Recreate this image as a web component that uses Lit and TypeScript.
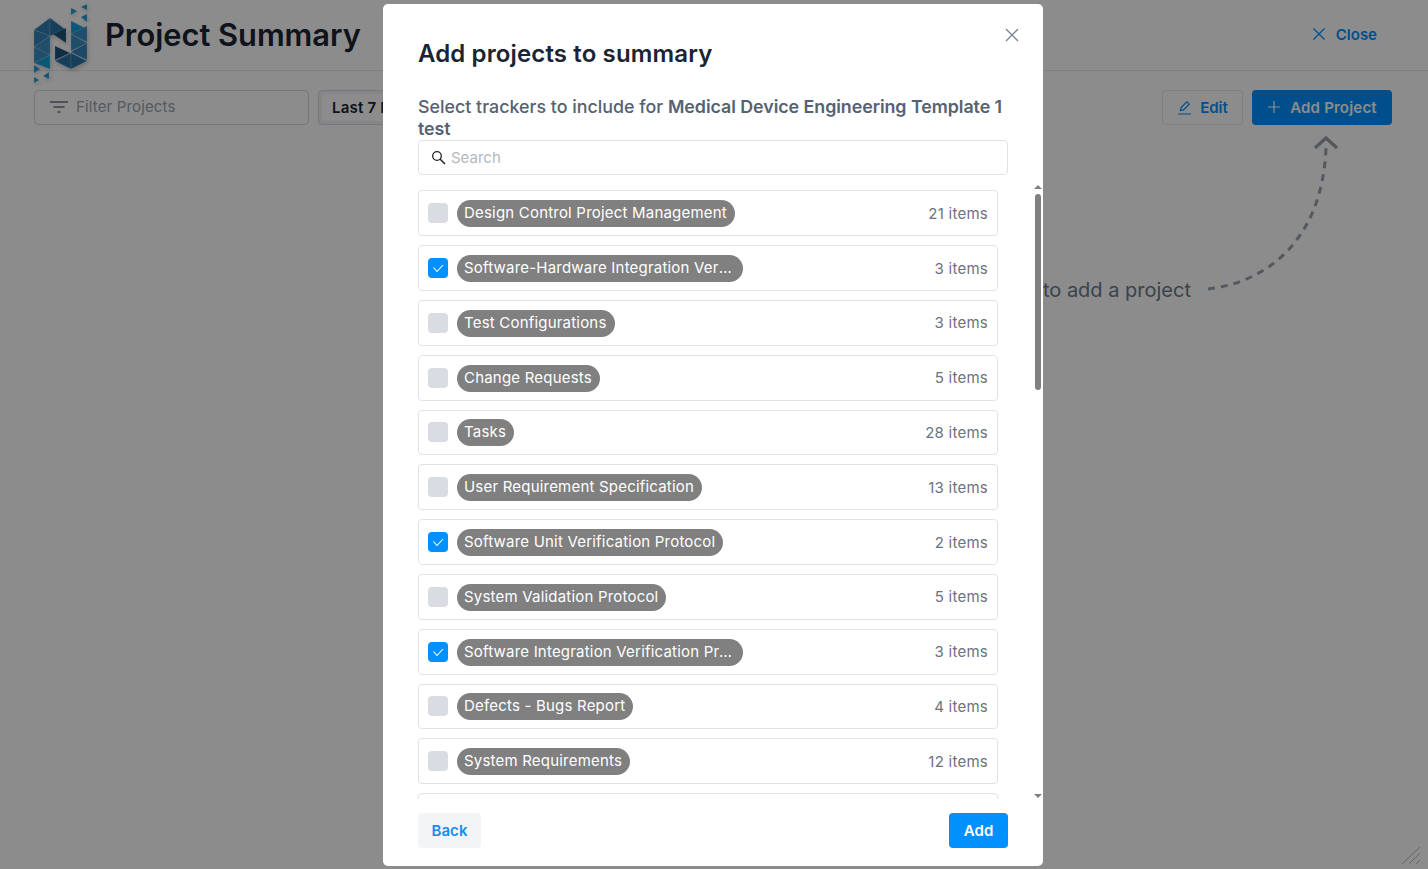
import { LitElement, html, css, svg } from "lit";
import { customElement } from "lit/decorators.js";

const rows: [string, string, boolean][] = [
  ["Design Control Project Management", "21 items", false],
  ["Software-Hardware Integration Verification Protocol", "3 items", true],
  ["Test Configurations", "3 items", false],
  ["Change Requests", "5 items", false],
  ["Tasks", "28 items", false],
  ["User Requirement Specification", "13 items", false],
  ["Software Unit Verification Protocol", "2 items", true],
  ["System Validation Protocol", "5 items", false],
  ["Software Integration Verification Protocol", "3 items", true],
  ["Defects - Bugs Report", "4 items", false],
  ["System Requirements", "12 items", false],
];

const tris: [string, string][] = [
  ["34,30 50,18 50,36", "#2f7fb4"],
  ["50,18 66,30 50,36", "#2a74a8"],
  ["53,34 66,28 66,43", "#1b5278"],
  ["34,30 50,36 34,47", "#3284ba"],
  ["34,47 50,36 50,55", "#3a8fc4"],
  ["34,47 50,55 34,63", "#3a8fc4"],
  ["34,63 50,55 50,69", "#14a0d8"],
  ["34,65 40,69 34,73", "#14a0d8"],
  ["49,72 43,76 49,79", "#14a0d8"],
  ["34,77 39,80 34,83", "#14a0d8"],
  ["71,8 77,11 71,15", "#14a0d8"],
  ["87,4 81,7 87,10", "#14a0d8"],
  ["87,14 81,17 87,22", "#14a0d8"],
  ["71,21 87,29 71,34", "#14a0d8"],
  ["87,26 71,34 87,42", "#3a8fc4"],
  ["71,34 87,43 71,51", "#3a8fc4"],
  ["87,43 71,52 87,60", "#3284ba"],
  ["55,46 70,53 55,60", "#1b5278"],
  ["55,61 71,53 71,69", "#2a74a8"],
  ["71,53 87,61 71,69", "#2a74a8"],
];

@customElement("app-root")
export class AppRoot extends LitElement {
  static styles = css`
    :host { display: block; height: 869px; overflow: hidden; position: relative; font-family: Inter, "Liberation Sans", sans-serif; background: #fff; color: #111827; }
    .page { height: 869px; display: flex; flex-direction: column; border-radius: 8px; }
    .header { flex: none; display: flex; align-items: center; justify-content: space-between; padding: 0 51px 2px 105px; height: 68px; border-bottom: 1px solid #e5e7eb; position: relative; }
    .logo { position: absolute; left: 0; top: 0; width: 100px; height: 90px; filter: drop-shadow(1px 2px 2px rgba(0,0,0,.2)); }
    h1 { margin: 0; font-size: 30.800px; font-weight: 600; color: #1a2433; }
    .close { display: flex; align-items: center; gap: 10px; color: #0090ff; font-size: 15px; font-weight: 600; }
    .toolbar { display: flex; align-items: center; padding: 19px 36px 0 34px; gap: 9px; }
    .filter { width: 275px; height: 35px; box-sizing: border-box; border: 1px solid #d5d9e0; border-radius: 4px; display: flex; align-items: center; gap: 7px; padding: 0 0 2px 15px; color: #9ca3af; font-size: 15px; letter-spacing: .15px; }
    .range { height: 35px; width: 160px; box-sizing: border-box; border: 1px solid #d5d9e0; border-radius: 4px; background: #f3f4f6; padding: 3px; display: flex; }
    .range span { flex: 1; background: #fff; border-radius: 3px; padding-left: 10px; font-size: 15px; line-height: 28px; font-weight: 600; color: #1a2433; white-space: nowrap; overflow: hidden; letter-spacing: .2px; }
    .spacer { flex: 1; }
    .edit { height: 35px; width: 81px; box-sizing: border-box; border: 1px solid #e5e7eb; border-radius: 4px; display: flex; align-items: center; justify-content: center; gap: 8px; padding-bottom: 1px; color: #0090ff; font-size: 15px; font-weight: 600; }
    .add-project { height: 35px; width: 140px; box-sizing: border-box; border-radius: 4px; background: #0090ff; color: #fff; display: flex; align-items: center; justify-content: center; gap: 9px; padding-bottom: 1px; font-size: 15px; font-weight: 600; letter-spacing: .2px; }
    .hint { display: flex; justify-content: flex-end; padding-right: 237px; margin-top: 151px; font-size: 20px; color: #6b7a8c; line-height: 28px; }
    .arrow { position: absolute; left: 1200px; top: 130px; }
    .mask { position: absolute; inset: 0; background: rgba(0,0,0,.45); }
    .resize { position: absolute; right: 5px; bottom: 3px; }
    .wrap { position: absolute; inset: 4px 0 3px 383px; display: flex; }
    .modal { width: 660px; background: #fff; border-radius: 5px; display: flex; flex-direction: column; position: relative; overflow: hidden; }
    .x { position: absolute; left: 621px; top: 23px; }
    .top { padding: 34px 35px 0; }
    h2 { margin: 0; font-size: 24px; line-height: 32px; font-weight: 600; color: #1a2433; letter-spacing: .13px; }
    .sub { margin: 26px 0 0; font-size: 17.850px; line-height: 22px; font-weight: 500; color: #556273; }
    .sub b { font-weight: 600; letter-spacing: -.06px; }
    .search { height: 35px; box-sizing: border-box; border: 1px solid #dfe3e8; border-radius: 4px; display: flex; align-items: center; padding: 0 0 1px 12px; gap: 5px; color: #b4b9c0; font-size: 15px; }
    .body { flex: 1; min-height: 0; display: flex; margin-top: 7px; padding-left: 35px; }
    .list { width: 580px; overflow: hidden; display: flex; flex-direction: column; gap: 9px; padding-top: 8.350px; }
    .row { flex: none; height: 45.800px; box-sizing: border-box; border: 1px solid #dfe3e8; border-radius: 4px; display: flex; align-items: center; padding: 0 9px; gap: 9px; }
    .cb { width: 20px; height: 20px; border-radius: 4px; background: #d9dde3; flex: none; display: flex; align-items: center; justify-content: center; }
    .cb.on { background: #0090ff; }
    .pill { max-width: 286px; box-sizing: border-box; height: 27px; border-radius: 14px; background: #808080; color: #fff; font-size: 15px; letter-spacing: .2px; line-height: 26px; padding: 0 8px 0 7px; white-space: nowrap; overflow: hidden; text-overflow: ellipsis; margin-top: 1px; }
    .count { margin-left: auto; color: #6b7280; font-size: 15px; letter-spacing: .25px; }
    .bar { width: 8px; margin-left: 36px; display: flex; flex-direction: column; align-items: center; padding-top: 3px; }
    .up { width: 0; height: 0; border: 4px solid transparent; border-top: 0; border-bottom: 4px solid #808080; }
    .down { width: 0; height: 0; border: 4px solid transparent; border-bottom: 0; border-top: 4px solid #808080; margin: auto 0 1px; }
    .thumb { width: 6px; height: 196px; border-radius: 3px; background: #808080; margin-top: 5px; }
    .foot { height: 67px; flex: none; display: flex; justify-content: space-between; align-items: flex-start; padding: 14px 35px 0; box-sizing: border-box; }
    .btn { height: 35px; border-radius: 4px; display: flex; align-items: center; justify-content: center; font-size: 15px; font-weight: 600; letter-spacing: .1px; }
    .back { width: 63px; background: #f3f4f6; color: #1a8cf0; }
    .add { width: 59px; background: #0090ff; color: #fff; }
  `;

  render() {
    return html`
      <div class="page">
        <div class="header">
          <svg class="logo" viewBox="0 0 100 90" width="100" height="90">
            ${tris.map(([p, c]) => svg`<polygon points=${p} fill=${c} stroke="#cfd8e0" stroke-width=".25"></polygon>`)}
          </svg>
          <h1>Project Summary</h1>
          <div class="close">
            <svg width="14" height="14" viewBox="0 0 14 14"><path d="M1.500 1.500l11 11M12.500 1.500l-11 11" stroke="#0090ff" stroke-width="1.300" fill="none"/></svg>
            Close
          </div>
        </div>
        <div class="toolbar">
          <div class="filter">
            <svg width="19" height="14" viewBox="0 0 19 14"><path d="M0 2h18M3.500 7h11M7.500 12h3" stroke="#6b7280" stroke-width="1.500" fill="none"/></svg>
            Filter Projects
          </div>
          <div class="range"><span>Last 7 Days</span></div>
          <div class="spacer"></div>
          <div class="edit">
            <svg width="15" height="15" viewBox="0 0 15 15"><path d="M1 14h13M3.500 10.500l.6-3L9.800 1.800l2.400 2.400-5.700 5.700z" stroke="#0090ff" stroke-width="1.200" fill="none"/></svg>
            Edit
          </div>
          <div class="add-project">
            <svg width="14" height="14" viewBox="0 0 14 14"><path d="M7 1v12M1 7h12" stroke="#fff" stroke-width="1.200" fill="none"/></svg>
            Add Project
          </div>
        </div>
        <div class="hint">to add a project</div>
      </div>
      <svg class="arrow" width="140" height="170" viewBox="1200 130 140 170">
        <path d="M1208 289C1262 283 1322 245 1326 148" stroke="#9aa3af" stroke-width="3" fill="none" stroke-dasharray="7 6"/>
        <path d="M1315 148l11-10 11 10" stroke="#9aa3af" stroke-width="3.500" fill="none"/>
      </svg>
      <div class="mask"></div>
      <svg class="resize" width="22" height="20" viewBox="0 0 22 20"><path d="M1 18L19 1M8 18L19 7M15 18l4-4" stroke="#666" stroke-width="1" fill="none"/></svg>
      <div class="wrap">
        <div class="modal">
          <svg class="x" width="16" height="16" viewBox="0 0 16 16"><path d="M2 2l12 12M14 2L2 14" stroke="#7b8794" stroke-width="1.400" fill="none"/></svg>
          <div class="top">
            <h2>Add projects to summary</h2>
            <p class="sub">Select trackers to include for <b>Medical Device Engineering Template 1 test</b></p>
            <div class="search">
              <svg width="15" height="15" viewBox="0 0 15 15"><circle cx="6" cy="6" r="4.300" stroke="#222" stroke-width="1.300" fill="none"/><path d="M9.200 9.200L14 14" stroke="#222" stroke-width="1.500"/></svg>
              Search
            </div>
          </div>
          <div class="body">
            <div class="list">
              ${rows.map(([n, c, on]) => html`
                <div class="row">
                  <span class="cb ${on ? "on" : ""}">
                    ${on ? html`<svg width="14" height="14" viewBox="0 0 14 14"><path d="M2.500 6.500L6 10.500 12 4" stroke="#fff" stroke-width="1.100" fill="none"/></svg>` : ""}
                  </span>
                  <span class="pill">${n}</span>
                  <span class="count">${c}</span>
                </div>`)}
              <div class="row"></div>
            </div>
            <div class="bar"><div class="up"></div><div class="thumb"></div><div class="down"></div></div>
          </div>
          <div class="foot">
            <div class="btn back">Back</div>
            <div class="btn add">Add</div>
          </div>
        </div>
      </div>
    `;
  }
}
